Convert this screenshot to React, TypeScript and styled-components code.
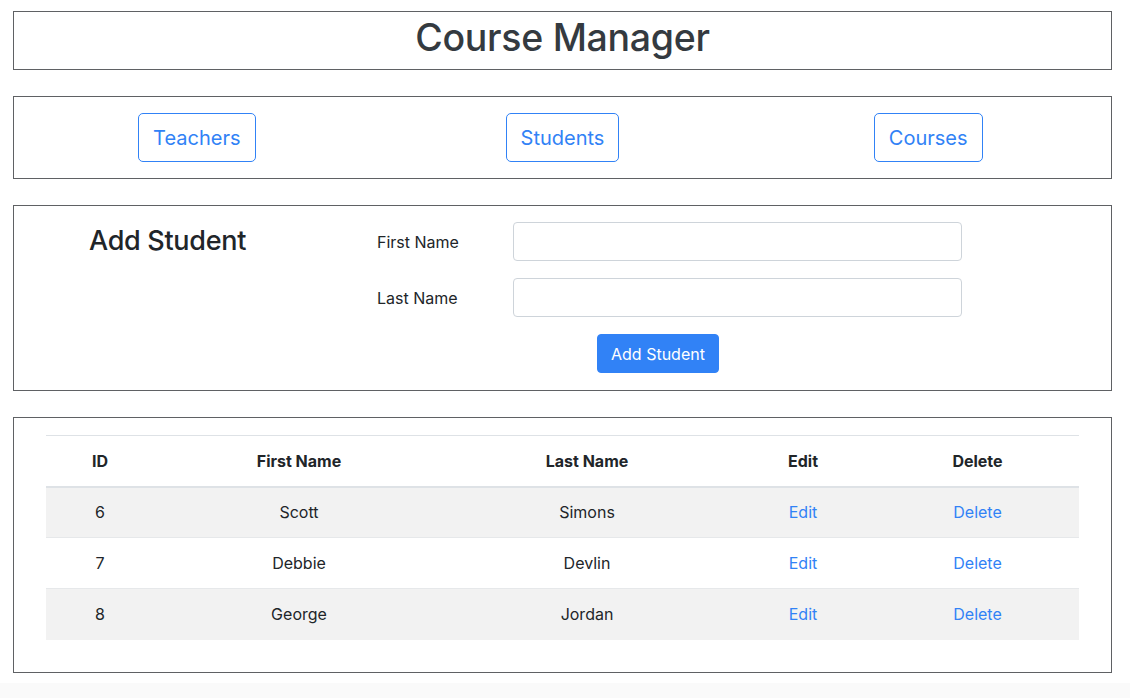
import React from "react";
import styled, { createGlobalStyle } from "styled-components";

const GlobalStyle = createGlobalStyle`
  * {
    box-sizing: border-box;
  }

  body {
    margin: 0;
    background: #ffffff;
    font-family: Inter, "Liberation Sans", Arial, sans-serif;
    color: #212529;
  }
`;

const Page = styled.div`
  padding: 11px 18px 0 13px;
  display: flex;
  flex-direction: column;
  gap: 26px;
`;

const Panel = styled.section`
  border: 1px solid #5f6164;
  background: #ffffff;
`;

const TitlePanel = styled(Panel)`
  height: 59px;
`;

const Title = styled.h1`
  margin: 0;
  padding-top: 2px;
  font-size: 37.5px;
  font-weight: 500;
  line-height: 48px;
  text-align: center;
  letter-spacing: -0.3px;
  color: #343a40;
`;

const NavPanel = styled(Panel)`
  display: grid;
  grid-template-columns: repeat(3, 1fr);
  padding: 16px 0;
`;

const NavCell = styled.div`
  display: flex;
  justify-content: center;
`;

const OutlineButton = styled.button`
  font-family: inherit;
  font-size: 20px;
  line-height: 30px;
  height: 49px;
  padding: 8px 14px;
  border: 1px solid #3182f6;
  border-radius: 5px;
  background: #ffffff;
  color: #3182f6;
  cursor: pointer;
`;

const FormPanel = styled(Panel)`
  display: flex;
  padding: 16px 0 17px;
`;

const FormHeading = styled.h2`
  width: 363px;
  margin: 0;
  padding-left: 75px;
  font-size: 27px;
  font-weight: 500;
  line-height: 38px;
  letter-spacing: -0.3px;
  color: #212529;
`;

const Form = styled.form`
  display: flex;
  flex-direction: column;
  gap: 17px;
`;

const FieldRow = styled.div`
  display: flex;
  align-items: center;
`;

const Label = styled.label`
  width: 136px;
  font-size: 16px;
  color: #212529;
`;

const Input = styled.input`
  width: 449px;
  height: 39px;
  padding: 6px 12px;
  font-family: inherit;
  font-size: 16px;
  border: 1px solid #ced4da;
  border-radius: 4px;
  outline: none;
`;

const ButtonRow = styled.div`
  padding-left: 220px;
`;

const SolidButton = styled.button`
  font-family: inherit;
  font-size: 16px;
  line-height: 24px;
  height: 39px;
  padding: 6px 13px;
  border: 1px solid #3182f6;
  border-radius: 4px;
  background: #3182f6;
  color: #ffffff;
  cursor: pointer;
`;

const TablePanel = styled(Panel)`
  padding: 17px 32px 32px;
`;

const Table = styled.table`
  width: 100%;
  border-collapse: collapse;
  table-layout: fixed;
  font-size: 16px;
`;

const HeadCell = styled.th`
  height: 51px;
  padding: 0 12px;
  font-weight: 700;
  text-align: center;
  border-top: 1px solid #dee2e6;
  border-bottom: 2px solid #dee2e6;
`;

const Row = styled.tr<{ $striped: boolean }>`
  background: ${(p) => (p.$striped ? "#f2f2f2" : "#ffffff")};
`;

const Cell = styled.td`
  height: 51px;
  padding: 0 12px;
  text-align: center;
  border-top: 1px solid #e6e8ea;
`;

const LinkText = styled.a`
  color: #3182f6;
  text-decoration: none;
  cursor: pointer;
`;

const BottomStrip = styled.div`
  height: 20px;
  margin: -16px -18px 0 -13px;
  background: #fafafa;
`;

const students = [
  { id: 6, first: "Scott", last: "Simons" },
  { id: 7, first: "Debbie", last: "Devlin" },
  { id: 8, first: "George", last: "Jordan" },
];

const columnWidths = [108, 290, 286, 146, 203];

const App: React.FC = () => {
  return (
    <>
      <GlobalStyle />
      <Page>
        <TitlePanel>
          <Title>Course Manager</Title>
        </TitlePanel>

        <NavPanel>
          <NavCell>
            <OutlineButton>Teachers</OutlineButton>
          </NavCell>
          <NavCell>
            <OutlineButton>Students</OutlineButton>
          </NavCell>
          <NavCell>
            <OutlineButton>Courses</OutlineButton>
          </NavCell>
        </NavPanel>

        <FormPanel>
          <FormHeading>Add Student</FormHeading>
          <Form onSubmit={(e) => e.preventDefault()}>
            <FieldRow>
              <Label htmlFor="first">First Name</Label>
              <Input id="first" type="text" />
            </FieldRow>
            <FieldRow>
              <Label htmlFor="last">Last Name</Label>
              <Input id="last" type="text" />
            </FieldRow>
            <ButtonRow>
              <SolidButton type="submit">Add Student</SolidButton>
            </ButtonRow>
          </Form>
        </FormPanel>

        <TablePanel>
          <Table>
            <colgroup>
              {columnWidths.map((w, i) => (
                <col key={i} style={{ width: w }} />
              ))}
            </colgroup>
            <thead>
              <tr>
                <HeadCell>ID</HeadCell>
                <HeadCell>First Name</HeadCell>
                <HeadCell>Last Name</HeadCell>
                <HeadCell>Edit</HeadCell>
                <HeadCell>Delete</HeadCell>
              </tr>
            </thead>
            <tbody>
              {students.map((s, i) => (
                <Row key={s.id} $striped={i % 2 === 0}>
                  <Cell>{s.id}</Cell>
                  <Cell>{s.first}</Cell>
                  <Cell>{s.last}</Cell>
                  <Cell>
                    <LinkText>Edit</LinkText>
                  </Cell>
                  <Cell>
                    <LinkText>Delete</LinkText>
                  </Cell>
                </Row>
              ))}
            </tbody>
          </Table>
        </TablePanel>
        <BottomStrip />
      </Page>
    </>
  );
};

export default App;
